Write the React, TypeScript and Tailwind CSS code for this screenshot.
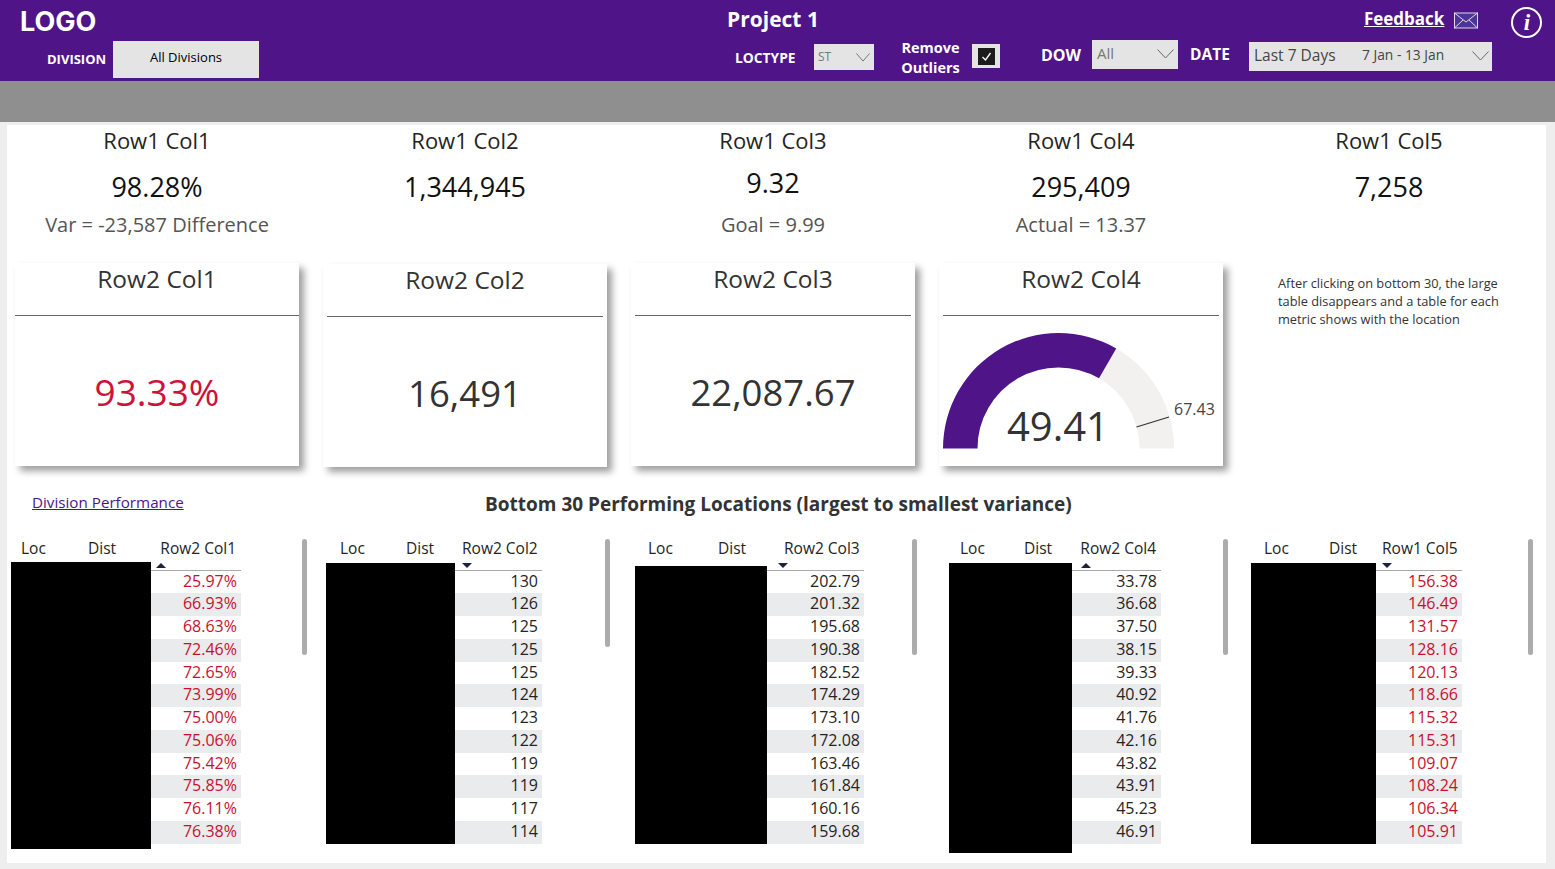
const font = { fontFamily: '"Open Sans", "Noto Sans", sans-serif' };

const kpis = [
  { title: "Row1 Col1", value: "98.28%", sub: "Var = -23,587 Difference", valueClass: "mt-[13px]" },
  { title: "Row1 Col2", value: "1,344,945", sub: "", valueClass: "mt-[13px]" },
  { title: "Row1 Col3", value: "9.32", sub: "Goal = 9.99", valueClass: "mt-[9px] mb-[9px]" },
  { title: "Row1 Col4", value: "295,409", sub: "Actual = 13.37", valueClass: "mt-[13px]" },
  { title: "Row1 Col5", value: "7,258", sub: "", valueClass: "mt-[13px]" },
];

const tables = [
  {
    head: "Row2 Col1",
    up: true,
    red: true,
    wrap: "ml-[4px] w-[297px]",
    black: "w-[140px] h-[287px]",
    vals: "w-[90px]",
    loc: "ml-[10px] w-[67px]",
    dist: "w-[60px]",
    arrow: "pl-[5px]",
    barH: "h-[116px]",
    barMl: "ml-[61px]",
    rows: ["25.97%", "66.93%", "68.63%", "72.46%", "72.65%", "73.99%", "75.00%", "75.06%", "75.42%", "75.85%", "76.11%", "76.38%"],
  },
  {
    head: "Row2 Col2",
    up: false,
    red: false,
    wrap: "ml-[18px] w-[284px]",
    black: "w-[129px] mt-[1px] h-[281px]",
    vals: "w-[87px]",
    loc: "ml-[14px] w-[66px]",
    dist: "w-[56px]",
    arrow: "pl-[7px]",
    barH: "h-[108px]",
    barMl: "ml-[62px]",
    rows: ["130", "126", "125", "125", "125", "124", "123", "122", "119", "119", "117", "114"],
  },
  {
    head: "Row2 Col3",
    up: false,
    red: false,
    wrap: "ml-[25px] w-[282px]",
    black: "w-[132px] mt-[4px] h-[278px]",
    vals: "w-[97px]",
    loc: "ml-[13px] w-[70px]",
    dist: "w-[66px]",
    arrow: "pl-[11px]",
    barH: "h-[116px]",
    barMl: "ml-[47px]",
    rows: ["202.79", "201.32", "195.68", "190.38", "182.52", "174.29", "173.10", "172.08", "163.46", "161.84", "160.16", "159.68"],
  },
  {
    head: "Row2 Col4",
    up: true,
    red: false,
    wrap: "ml-[32px] w-[280px]",
    black: "w-[123px] mt-[1px] h-[290px]",
    vals: "w-[89px]",
    loc: "ml-[11px] w-[64px]",
    dist: "w-[56px]",
    arrow: "pl-[9px]",
    barH: "h-[116px]",
    barMl: "ml-[62px]",
    rows: ["33.78", "36.68", "37.50", "38.15", "39.33", "40.92", "41.76", "42.16", "43.82", "43.91", "45.23", "46.91"],
  },
  {
    head: "Row1 Col5",
    up: false,
    red: true,
    wrap: "ml-[22px] w-[282px]",
    black: "w-[125px] mt-[1px] h-[281px]",
    vals: "w-[86px]",
    loc: "ml-[13px] w-[65px]",
    dist: "w-[53px]",
    arrow: "pl-[6px]",
    barH: "h-[116px]",
    barMl: "ml-[65px]",
    rows: ["156.38", "146.49", "131.57", "128.16", "120.13", "118.66", "115.32", "115.31", "109.07", "108.24", "106.34", "105.91"],
  },
];

function Chevron({ className }: { className: string }) {
  return (
    <svg viewBox="0 0 17 10" className={className} fill="none" stroke="#666" strokeWidth="1" preserveAspectRatio="none">
      <path d="M0.5 0.5 L8.5 9 L16.5 0.5" />
    </svg>
  );
}

function Slicer({ text, className, chevron }: { text: string; className: string; chevron: string }) {
  return (
    <div className={`flex items-center justify-between bg-[#e4e4e4] text-[#777] ${className}`}>
      <span>{text}</span>
      <Chevron className={chevron} />
    </div>
  );
}

function Card({ title, className, rule, children }: { title: string; className?: string; rule?: string; children: React.ReactNode }) {
  return (
    <div className={`h-[203px] w-[284px] bg-white shadow-[5px_5px_7px_rgba(0,0,0,0.38)] ${className ?? ""}`}>
      <div className={`h-[53px] border-b border-[#666] text-center text-[24.5px] leading-[32px] text-[#333] ${rule ?? "mx-[4px]"}`}>
        {title}
      </div>
      {children}
    </div>
  );
}

function Gauge() {
  return (
    <svg viewBox="0 0 284 150" className="-mt-px h-[150px] w-[284px]">
      <path d="M177.25 33.5 A115.5 115.5 0 0 1 235 133.5 L200.5 133.5 A81 81 0 0 0 160 63.3 Z" fill="#f2f1f0" />
      <path d="M4 133.5 A115.5 115.5 0 0 1 177.25 33.5 L160 63.3 A81 81 0 0 0 38.5 133.5 Z" fill="#4f1488" />
      <line x1="197.5" y1="112" x2="230" y2="102" stroke="#333" strokeWidth="1.3" />
      <text x="235" y="100" fontSize="16" fill="#444">67.43</text>
      <text x="119" y="126" fontSize="40" fill="#333" textAnchor="middle">49.41</text>
    </svg>
  );
}

function DataTable({ t }: { t: (typeof tables)[number] }) {
  return (
    <div className={`flex ${t.wrap}`}>
      <div>
        <div className="flex h-[20px] items-end text-[15.5px] leading-[20px] text-[#252423]">
          <span className={t.loc}>Loc</span>
          <span className={t.dist}>Dist</span>
          <span className="ml-auto whitespace-nowrap pr-[5px]">{t.head}</span>
        </div>
        <div className="mt-[4px] flex">
          <div className={`bg-black ${t.black}`} />
          <div className={t.vals}>
            <div className={`h-[8px] pt-[1px] ${t.arrow}`}>
              {t.up ? (
                <div className="h-0 w-0 border-x-[5px] border-b-[5px] border-x-transparent border-b-[#1a2340]" />
              ) : (
                <div className="h-0 w-0 border-x-[5px] border-t-[5px] border-x-transparent border-t-[#1a2340]" />
              )}
            </div>
            <div className="border-t border-[#aaa]">
              {t.rows.map((r, i) => (
                <div
                  key={r + i}
                  className={`h-[22.75px] pr-[4px] text-right text-[16px] leading-[20px] ${t.red ? "text-[#c8102e]" : "text-[#252423]"} ${i % 2 ? "bg-[#eaebed]" : "bg-white"}`}
                >
                  {r}
                </div>
              ))}
            </div>
          </div>
        </div>
      </div>
      <div className={`mt-[1px] w-[5px] rounded bg-[#acacac] ${t.barH} ${t.barMl}`} />
    </div>
  );
}

export default function App() {
  return (
    <div className="h-[869px] w-[1555px] overflow-hidden bg-[#eeeeee]" style={font}>
      {/* header */}
      <header className="flex h-[81px] bg-[#4f1488] text-white">
        <div className="w-[700px]">
          <div className="h-[41px] pl-[20px] pt-[5px] text-[27px] font-bold leading-[34px]" style={{ fontFamily: "Inter, sans-serif" }}>
            LOGO
          </div>
          <div className="ml-[47px] flex">
            <span className="mt-[9px] w-[66px] text-[13px] font-bold leading-[18px]">DIVISION</span>
            <div className="h-[37px] w-[146px] bg-[#e4e4e4] pt-[6px] text-center text-[13px] leading-[20px] text-black">
              All Divisions
            </div>
          </div>
        </div>
        <div className="w-[855px]">
          <div className="flex h-[40px]">
            <span className="ml-[27px] mt-[4px] text-[21px] font-bold leading-[30px]">Project 1</span>
            <span className="ml-[545px] mt-[6px] text-[17px] font-bold leading-[26px] underline">Feedback</span>
            <svg viewBox="0 0 26 22" className="ml-[9px] mt-[9px] h-[22px] w-[26px]" fill="#4d3596" stroke="#ddd8ee" strokeWidth="1">
              <rect x="1.5" y="4" width="23" height="15" />
              <path d="M1.5 4 L13 13 L24.5 4 M1.5 19 L10 11 M24.5 19 L16 11" fill="none" />
            </svg>
            <div className="ml-[32px] mt-[7px] flex h-[31px] w-[31px] items-center justify-center rounded-full border-2 border-white">
              <span className="text-[23px] font-bold italic leading-[23px]" style={{ fontFamily: '"Liberation Serif", serif' }}>
                i
              </span>
            </div>
          </div>
          <div className="flex items-start">
            <span className="ml-[35px] mt-[9px] w-[79px] text-[13.8px] font-bold leading-[18px]">LOCTYPE</span>
            <Slicer text="ST" className="mt-[4px] h-[26px] w-[60px] pl-[4px] pr-[4px] text-[12px]" chevron="h-[9px] w-[14px]" />
            <span className="ml-[27px] -mt-[2px] w-[59px] text-center text-[14.5px] font-bold leading-[20px]">
              Remove
              <br />
              Outliers
            </span>
            <div className="ml-[12px] mt-[4px] flex h-[24px] w-[28px] items-center justify-center bg-[#e4e4e4]">
              <div className="flex h-[17px] w-[17px] items-center justify-center bg-[#1c1c1c]">
                <svg viewBox="0 0 13 13" className="h-[13px] w-[13px]" fill="none" stroke="#fff" strokeWidth="1.3">
                  <path d="M2.5 7 L5.5 10 L10.5 3" />
                </svg>
              </div>
            </div>
            <span className="ml-[41px] mt-[4px] w-[51px] text-[16px] font-bold leading-[22px]">DOW</span>
            <Slicer text="All" className="h-[29px] w-[86px] pb-[2px] pl-[5px] pr-[4px] text-[15px]" chevron="h-[10px] w-[17px]" />
            <span className="ml-[12px] mt-[3px] w-[59px] text-[15.5px] font-bold leading-[22px]">DATE</span>
            <div className="mt-[2px] flex h-[29px] w-[243px] items-center bg-[#e4e4e4] pb-[2px] pl-[5px] pr-[3px] text-[#444]">
              <span className="w-[108px] text-[15.5px]">Last 7 Days</span>
              <span className="text-[13.8px]">7 Jan - 13 Jan</span>
              <Chevron className="ml-auto h-[10px] w-[17px]" />
            </div>
          </div>
        </div>
      </header>
      <div className="h-[41px] bg-[#8f8f8f]" />

      {/* main panel */}
      <main className="ml-[7px] mt-[3px] h-[738px] w-[1539px] bg-white">
        <div className="-ml-[4px] flex">
          {kpis.map((k) => (
            <div key={k.title} className="w-[308px] text-center">
              <div className="h-[30px] text-[22px] leading-[30px] text-[#252423]">{k.title}</div>
              <div className={`h-[38px] text-[27px] leading-[38px] text-[#111] ${k.valueClass}`}>{k.value}</div>
              <div className="mt-[5px] h-[28px] text-[20px] leading-[28px] text-[#555]">{k.sub}</div>
            </div>
          ))}
        </div>

        <div className="ml-[8px] mt-[24px] flex items-start gap-[24px]">
          <Card title="Row2 Col1" rule="mx-0">
            <div className="pt-[51px] text-center text-[37px] leading-[50px] text-[#d0103a]">93.33%</div>
          </Card>
          <Card title="Row2 Col2" className="mt-[1px]">
            <div className="pt-[51px] text-center text-[36.5px] leading-[50px] text-[#333]">16,491</div>
          </Card>
          <Card title="Row2 Col3">
            <div className="pt-[51px] text-center text-[36.5px] leading-[50px] text-[#333]">22,087.67</div>
          </Card>
          <Card title="Row2 Col4">
            <Gauge />
          </Card>
          <p className="ml-[31px] mt-[11px] w-[240px] text-[12.8px] leading-[18px] text-[#333]">
            After clicking on bottom 30, the large table disappears and a table for each metric shows with the location
          </p>
        </div>

        <div className="mt-[23px] flex items-center">
          <a className="ml-[25px] -mt-[4px] w-[453px] text-[15.2px] text-[#4f1488] underline">Division Performance</a>
          <span className="text-[19px] font-bold text-[#333]">Bottom 30 Performing Locations (largest to smallest variance)</span>
        </div>

        <div className="mt-[19px] flex">
          {tables.map((t) => (
            <DataTable key={t.head} t={t} />
          ))}
        </div>
      </main>
    </div>
  );
}
